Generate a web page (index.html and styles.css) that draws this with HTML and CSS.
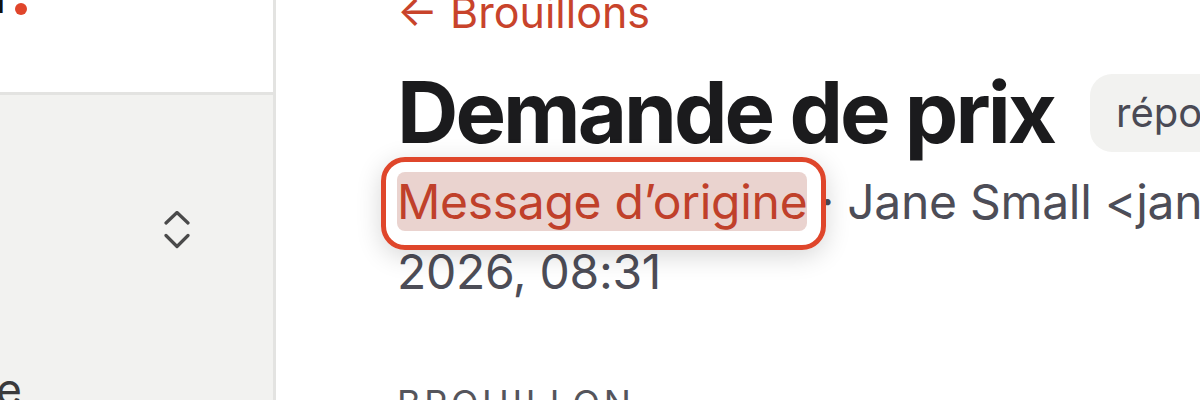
FILE: index.html
```html
<!DOCTYPE html>
<html lang="fr">
<head>
<meta charset="utf-8">
<title>Demande de prix</title>
<link rel="stylesheet" href="styles.css">
</head>
<body>
<div class="app">
  <aside class="sidebar">
    <div class="side-head">
      <div class="logo-clip"><span class="logo">Brouillon</span></div>
      <span class="logo-dot"></span>
    </div>
    <div class="side-body">
      <div class="select-row">
        <svg class="chevrons" width="26" height="38" viewBox="0 0 26 38" fill="none" stroke="#4a4a4a" stroke-width="3.2" stroke-linecap="round" stroke-linejoin="round">
          <polyline points="2,12 13,1.5 24,12"/>
          <polyline points="2,24.5 13,35.5 24,24.5"/>
        </svg>
      </div>
      <div class="side-item-clip"><span class="side-item">Archive</span></div>
    </div>
  </aside>
  <main class="main">
    <a class="back" href="#">← Brouillons</a>
    <div class="title-row">
      <h1 class="title">Demande de prix</h1>
      <span class="badge">réponse</span>
    </div>
    <p class="meta"><span class="meta-first"><span class="origin">Message d’origine</span> · Jane Small &lt;jane.small@example.com&gt; · 12 janv.</span> 2026, 08:31</p>
    <div class="section-label">Brouillon</div>
  </main>
</div>
</body>
</html>
```
FILE: styles.css
```css
html, body {
  margin: 0;
  padding: 0;
  background: #ffffff;
  overflow: hidden;
}
body {
  width: 1200px;
  height: 400px;
  font-family: Inter, "Liberation Sans", sans-serif;
  color: #1c1c1e;
}
.app {
  display: flex;
  height: 400px;
  overflow: hidden;
}
.sidebar {
  width: 273px;
  flex: none;
  border-right: 3px solid #e3e3e1;
  display: flex;
  flex-direction: column;
  background: #f2f2f0;
  overflow: hidden;
}
.side-head {
  flex: none;
  height: 92px;
  background: #ffffff;
  border-bottom: 3px solid #e3e3e1;
  display: flex;
  align-items: flex-start;
  gap: 10px;
}
.logo-clip {
  flex: none;
  width: 5px;
  display: flex;
  justify-content: flex-end;
  white-space: nowrap;
  margin-top: -23px;
}
.logo {
  font-size: 42px;
  font-weight: 800;
  color: #111111;
  line-height: 1;
  display: block;
}
.logo-dot {
  flex: none;
  width: 12px;
  height: 12px;
  border-radius: 50%;
  background: #e0452b;
  margin-top: 3px;
}
.side-body {
  flex: none;
  display: flex;
  flex-direction: column;
  padding-top: 116px;
}
.select-row {
  display: flex;
  justify-content: flex-end;
  padding-right: 83px;
}
.chevrons {
  display: block;
}
.side-item-clip {
  margin-top: 118px;
  width: 22px;
  display: flex;
  justify-content: flex-end;
  white-space: nowrap;
}
.side-item {
  font-size: 44px;
  color: #3a3a3c;
  line-height: 1;
  display: block;
}
.main {
  flex: 1;
  padding-left: 121px;
  min-width: 0;
}
.back {
  display: block;
  color: #c8432b;
  text-decoration: none;
  font-size: 43px;
  line-height: 1;
  margin-top: -9px;
  white-space: nowrap;
}
.title-row {
  display: flex;
  align-items: center;
  gap: 36px;
  margin-top: 36px;
  white-space: nowrap;
}
.title {
  margin: 0;
  flex: none;
  font-size: 85px;
  line-height: 1;
  font-weight: 700;
  letter-spacing: -0.035em;
  color: #1b1b1d;
}
.badge {
  flex: none;
  background: #f2f2f0;
  border-radius: 22px;
  height: 78px;
  display: flex;
  align-items: center;
  padding: 0 26px;
  font-size: 40px;
  color: #4a4a55;
}
.meta {
  margin: 12px 0 0;
  font-size: 48px;
  line-height: 70px;
  letter-spacing: -0.3px;
  color: #4d4d57;
  width: 780px;
}
.meta-first {
  white-space: nowrap;
}
.origin {
  position: relative;
  color: #c0402a;
  background: #ead3cf;
  border-radius: 8px;
}
.origin::after {
  content: "";
  position: absolute;
  left: -16px;
  right: -19px;
  top: -15px;
  bottom: -19px;
  border: 5px solid #df462b;
  border-radius: 24px;
  box-shadow: 0 6px 26px rgba(0, 0, 0, 0.16);
  pointer-events: none;
}
.section-label {
  margin-top: 78px;
  font-size: 36px;
  line-height: 1;
  letter-spacing: 0.1em;
  text-transform: uppercase;
  color: #55555c;
}
```
